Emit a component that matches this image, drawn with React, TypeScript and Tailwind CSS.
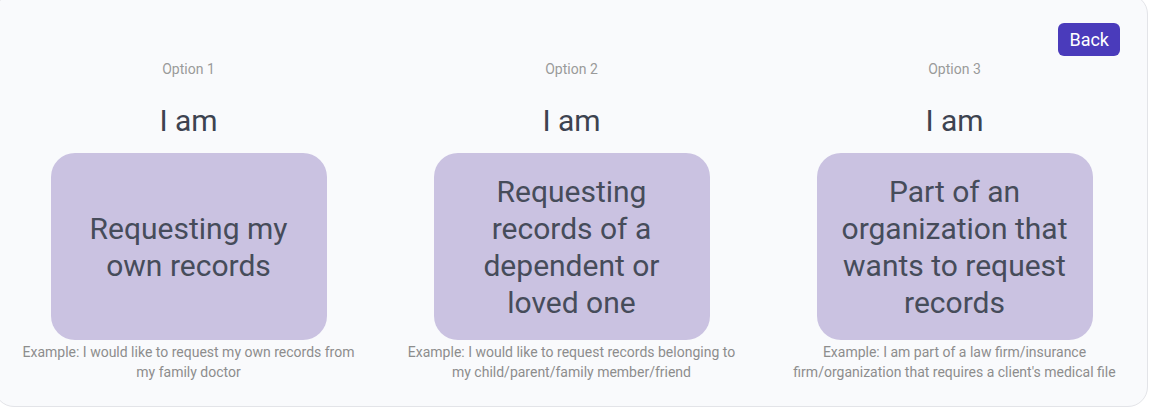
const OPTIONS = [
  {
    label: 'Option 1',
    text: 'Requesting my own records',
    example: 'Example: I would like to request my own records from my family doctor',
  },
  {
    label: 'Option 2',
    text: 'Requesting records of a dependent or loved one',
    example: 'Example: I would like to request records belonging to my child/parent/family member/friend',
  },
  {
    label: 'Option 3',
    text: 'Part of an organization that wants to request records',
    example: "Example: I am part of a law firm/insurance firm/organization that requires a client's medical file",
  },
]

interface OptionProps {
  label: string
  text: string
  example: string
}

function OptionColumn({ label, text, example }: OptionProps) {
  return (
    <div className="flex flex-col items-center">
      <span className="text-[14px] leading-5 text-[#9a9a9a]">{label}</span>
      <span className="mt-[24px] text-[30px] leading-[36px] text-[#3d4350]">I am</span>
      <button className="mt-[14px] w-[276px] h-[187px] rounded-[24px] bg-[#cac2e1] px-5 flex items-center justify-center text-center text-[30px] leading-[37px] text-[#464c5a]">
        {text}
      </button>
      <p className="mt-[2px] w-[345px] text-center text-[14px] leading-5 text-[#8d8d8d]">{example}</p>
    </div>
  )
}

export default function App() {
  return (
    <div className="w-[1150px] h-[411px] overflow-hidden bg-white" style={{ fontFamily: 'Roboto, "Liberation Sans", sans-serif' }}>
      <div className="-mt-[6px] -ml-[6px] w-[1154px] h-[413px] rounded-[20px] border border-[#e3e4e8] bg-[#f9fafc] pt-[28px]">
        <div className="flex justify-end pr-[27px]">
          <button className="h-[33px] px-[11px] rounded-[6px] bg-[#4a3bbb] text-white text-[18px] leading-[33px]">Back</button>
        </div>
        <div className="mt-[3px] ml-[2px] w-[1149px] grid grid-cols-3">
          {OPTIONS.map(o => (
            <OptionColumn key={o.label} {...o} />
          ))}
        </div>
      </div>
    </div>
  )
}
